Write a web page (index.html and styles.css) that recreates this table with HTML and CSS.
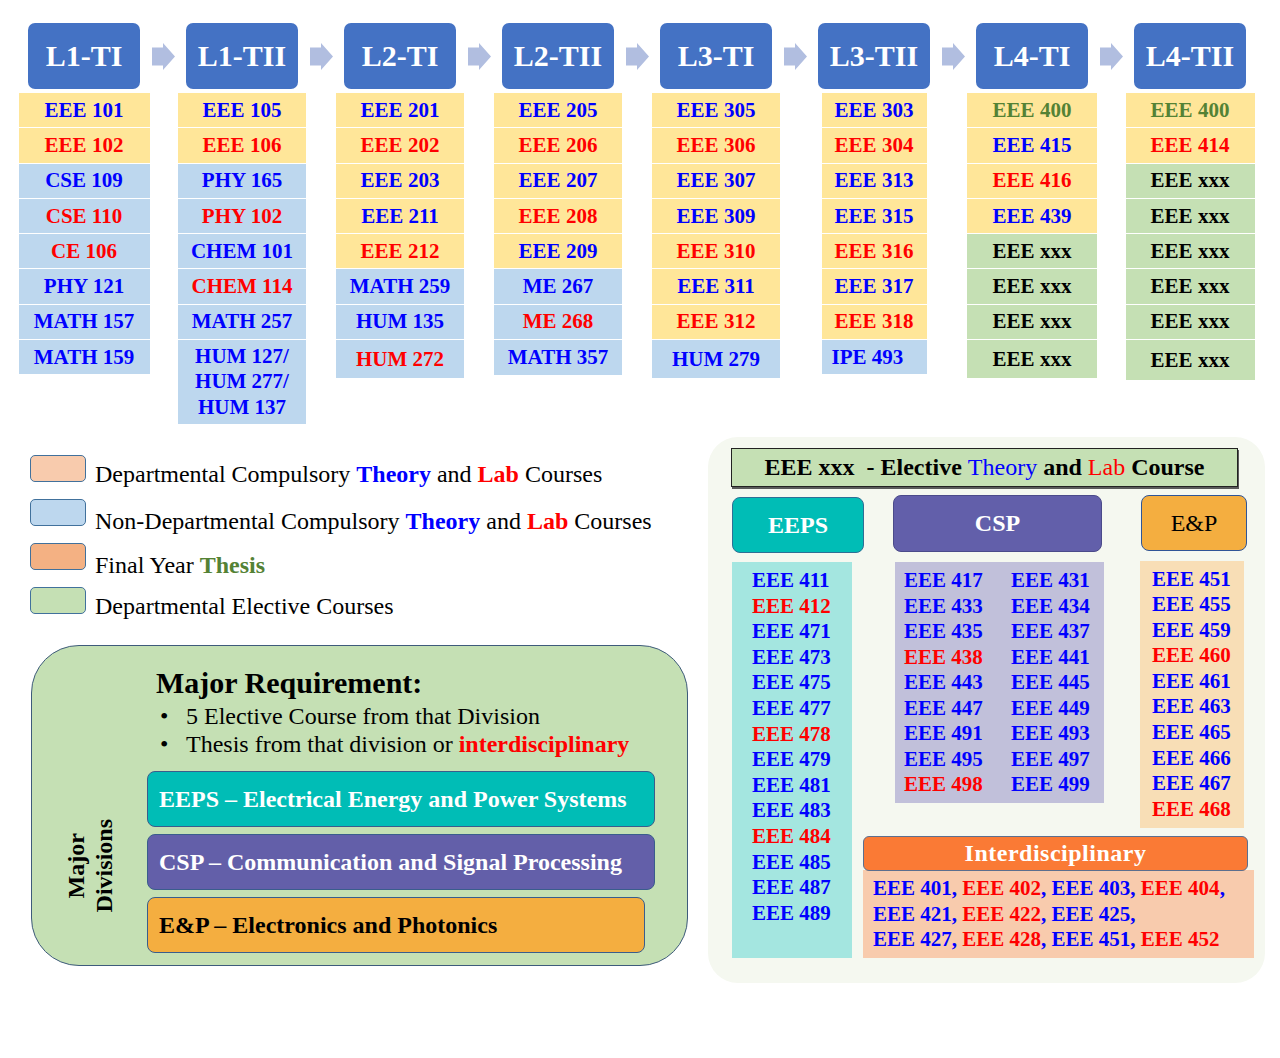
FILE: index.html
```html
<!DOCTYPE html>
<html>
<head>
<meta charset="utf-8">
<title>EEE Course Roadmap</title>
<link rel="stylesheet" href="styles.css">
</head>
<body>
<div class="page">
  <section class="levels">
    <div class="heads">
      <div class="head">L1-TI</div>
      <div class="arrow"><svg width="23" height="27" viewBox="0 0 23 27"><path d="M0 4.5H11V0L23 13.5L11 27V22.5H0Z"/></svg></div>
      <div class="head">L1-TII</div>
      <div class="arrow"><svg width="23" height="27" viewBox="0 0 23 27"><path d="M0 4.5H11V0L23 13.5L11 27V22.5H0Z"/></svg></div>
      <div class="head">L2-TI</div>
      <div class="arrow"><svg width="23" height="27" viewBox="0 0 23 27"><path d="M0 4.5H11V0L23 13.5L11 27V22.5H0Z"/></svg></div>
      <div class="head">L2-TII</div>
      <div class="arrow"><svg width="23" height="27" viewBox="0 0 23 27"><path d="M0 4.5H11V0L23 13.5L11 27V22.5H0Z"/></svg></div>
      <div class="head">L3-TI</div>
      <div class="arrow"><svg width="23" height="27" viewBox="0 0 23 27"><path d="M0 4.5H11V0L23 13.5L11 27V22.5H0Z"/></svg></div>
      <div class="head">L3-TII</div>
      <div class="arrow"><svg width="23" height="27" viewBox="0 0 23 27"><path d="M0 4.5H11V0L23 13.5L11 27V22.5H0Z"/></svg></div>
      <div class="head">L4-TI</div>
      <div class="arrow"><svg width="23" height="27" viewBox="0 0 23 27"><path d="M0 4.5H11V0L23 13.5L11 27V22.5H0Z"/></svg></div>
      <div class="head">L4-TII</div>
    </div>

    <div class="cols">
      <div class="slot"><div class="col w131">
        <div class="cell yel blue">EEE 101</div>
        <div class="cell yel red">EEE 102</div>
        <div class="cell sky blue">CSE 109</div>
        <div class="cell sky red">CSE 110</div>
        <div class="cell sky red">CE 106</div>
        <div class="cell sky blue">PHY 121</div>
        <div class="cell sky blue">MATH 157</div>
        <div class="cell sky blue">MATH 159</div>
      </div></div>

      <div class="slot"><div class="col w128">
        <div class="cell yel blue">EEE 105</div>
        <div class="cell yel red">EEE 106</div>
        <div class="cell sky blue">PHY 165</div>
        <div class="cell sky red">PHY 102</div>
        <div class="cell sky blue">CHEM 101</div>
        <div class="cell sky red">CHEM 114</div>
        <div class="cell sky blue">MATH 257</div>
        <div class="cell sky blue multi"><span>HUM 127/</span><span>HUM 277/</span><span>HUM 137</span></div>
      </div></div>

      <div class="slot"><div class="col w128">
        <div class="cell yel blue">EEE 201</div>
        <div class="cell yel red">EEE 202</div>
        <div class="cell yel blue">EEE 203</div>
        <div class="cell yel blue">EEE 211</div>
        <div class="cell yel red">EEE 212</div>
        <div class="cell sky blue">MATH 259</div>
        <div class="cell sky blue">HUM 135</div>
        <div class="cell sky red tall">HUM 272</div>
      </div></div>

      <div class="slot"><div class="col w128">
        <div class="cell yel blue">EEE 205</div>
        <div class="cell yel red">EEE 206</div>
        <div class="cell yel blue">EEE 207</div>
        <div class="cell yel red">EEE 208</div>
        <div class="cell yel blue">EEE 209</div>
        <div class="cell sky blue">ME 267</div>
        <div class="cell sky red">ME 268</div>
        <div class="cell sky blue mid">MATH 357</div>
      </div></div>

      <div class="slot"><div class="col w128">
        <div class="cell yel blue">EEE 305</div>
        <div class="cell yel red">EEE 306</div>
        <div class="cell yel blue">EEE 307</div>
        <div class="cell yel blue">EEE 309</div>
        <div class="cell yel red">EEE 310</div>
        <div class="cell yel blue">EEE 311</div>
        <div class="cell yel red">EEE 312</div>
        <div class="cell sky blue tall">HUM 279</div>
      </div></div>

      <div class="slot"><div class="col w105">
        <div class="cell yel blue">EEE 303</div>
        <div class="cell yel red">EEE 304</div>
        <div class="cell yel blue">EEE 313</div>
        <div class="cell yel blue">EEE 315</div>
        <div class="cell yel red">EEE 316</div>
        <div class="cell yel blue">EEE 317</div>
        <div class="cell yel red">EEE 318</div>
        <div class="cell sky blue shift">IPE 493</div>
      </div></div>

      <div class="slot"><div class="col w130">
        <div class="cell yel green">EEE 400</div>
        <div class="cell yel blue">EEE 415</div>
        <div class="cell yel red">EEE 416</div>
        <div class="cell yel blue">EEE 439</div>
        <div class="cell grn black">EEE xxx</div>
        <div class="cell grn black">EEE xxx</div>
        <div class="cell grn black">EEE xxx</div>
        <div class="cell grn black tall">EEE xxx</div>
      </div></div>

      <div class="slot"><div class="col w129">
        <div class="cell yel green">EEE 400</div>
        <div class="cell yel red">EEE 414</div>
        <div class="cell grn black">EEE xxx</div>
        <div class="cell grn black">EEE xxx</div>
        <div class="cell grn black">EEE xxx</div>
        <div class="cell grn black">EEE xxx</div>
        <div class="cell grn black">EEE xxx</div>
        <div class="cell grn black taller">EEE xxx</div>
      </div></div>
    </div>
  </section>

  <section class="bottom">
    <div class="left">
      <div class="legend">
        <div class="leg-row"><div class="swatch sw-peach"></div><div class="leg-text">Departmental Compulsory <b class="blue">Theory</b> and <b class="red">Lab</b> Courses</div></div>
        <div class="leg-row"><div class="swatch sw-sky"></div><div class="leg-text">Non-Departmental Compulsory <b class="blue">Theory</b> and <b class="red">Lab</b> Courses</div></div>
        <div class="leg-row"><div class="swatch sw-orange"></div><div class="leg-text">Final Year <b class="green">Thesis</b></div></div>
        <div class="leg-row"><div class="swatch sw-green"></div><div class="leg-text">Departmental Elective Courses</div></div>
      </div>

      <div class="major">
        <div class="req">
          <h2 class="req-title">Major Requirement:</h2>
          <ul class="req-list">
            <li><span class="dot">•</span>5 Elective Course from that Division</li>
            <li><span class="dot">•</span>Thesis from that division or <b class="red">interdisciplinary</b></li>
          </ul>
        </div>
        <div class="mlabel">Major<br>Divisions</div>
        <div class="bars">
          <div class="bar bar-eeps">EEPS – Electrical Energy and Power Systems</div>
          <div class="bar bar-csp">CSP – Communication and Signal Processing</div>
          <div class="bar bar-ep">E&amp;P – Electronics and Photonics</div>
        </div>
      </div>
    </div>

    <div class="panel">
      <div class="title">EEE xxx&nbsp; - Elective&nbsp;<span class="blue thin">Theory</span>&nbsp;and&nbsp;<span class="red thin">Lab</span>&nbsp;Course</div>
      <div class="divs">
        <div class="eeps-col">
          <div class="dhead dh-eeps">EEPS</div>
          <div class="eeps-list">
            <div class="blue">EEE 411</div>
            <div class="red">EEE 412</div>
            <div class="blue">EEE 471</div>
            <div class="blue">EEE 473</div>
            <div class="blue">EEE 475</div>
            <div class="blue">EEE 477</div>
            <div class="red">EEE 478</div>
            <div class="blue">EEE 479</div>
            <div class="blue">EEE 481</div>
            <div class="blue">EEE 483</div>
            <div class="red">EEE 484</div>
            <div class="blue">EEE 485</div>
            <div class="blue">EEE 487</div>
            <div class="blue">EEE 489</div>
          </div>
        </div>
        <div class="rcol">
          <div class="rtop">
            <div class="csp-grp">
              <div class="dhead dh-csp">CSP</div>
              <div class="csp-list">
                <div class="blue">EEE 417</div><div class="blue">EEE 431</div>
                <div class="blue">EEE 433</div><div class="blue">EEE 434</div>
                <div class="blue">EEE 435</div><div class="blue">EEE 437</div>
                <div class="red">EEE 438</div><div class="blue">EEE 441</div>
                <div class="blue">EEE 443</div><div class="blue">EEE 445</div>
                <div class="blue">EEE 447</div><div class="blue">EEE 449</div>
                <div class="blue">EEE 491</div><div class="blue">EEE 493</div>
                <div class="blue">EEE 495</div><div class="blue">EEE 497</div>
                <div class="red">EEE 498</div><div class="blue">EEE 499</div>
              </div>
            </div>
            <div class="ep-grp">
              <div class="dhead dh-ep">E&amp;P</div>
              <div class="ep-list">
                <div class="blue">EEE 451</div>
                <div class="blue">EEE 455</div>
                <div class="blue">EEE 459</div>
                <div class="red">EEE 460</div>
                <div class="blue">EEE 461</div>
                <div class="blue">EEE 463</div>
                <div class="blue">EEE 465</div>
                <div class="blue">EEE 466</div>
                <div class="blue">EEE 467</div>
                <div class="red">EEE 468</div>
              </div>
            </div>
          </div>
          <div class="inter">
            <div class="ihead">Interdisciplinary</div>
            <div class="ibody">
              <div>EEE 401, <span class="red">EEE 402</span>, EEE 403, <span class="red">EEE 404</span>,</div>
              <div>EEE 421, <span class="red">EEE 422</span>, EEE 425,</div>
              <div>EEE 427, <span class="red">EEE 428</span>, EEE 451, <span class="red">EEE 452</span></div>
            </div>
          </div>
        </div>
      </div>
    </div>
  </section>
</div>
</body>
</html>
```

FILE: styles.css
```css
* {
  box-sizing: border-box;
  margin: 0;
  padding: 0;
}

body {
  margin: 0;
  background: #ffffff;
  font-family: "Liberation Serif", "Times New Roman", serif;
  color: #000000;
}

.page {
  width: 1280px;
  height: 1058px;
  overflow: hidden;
  padding-top: 23px;
}

/* text colours */
.blue { color: #0000ff; }
.red { color: #ff0000; }
.green { color: #548235; }
.black { color: #000000; }
.thin { font-weight: normal; }

/* ---------- top level roadmap ---------- */
.heads {
  display: flex;
  padding-left: 28px;
}

.head {
  width: 112px;
  height: 66px;
  flex: none;
  background: #4472c4;
  border-radius: 7px;
  color: #ffffff;
  font-size: 30px;
  font-weight: bold;
  display: flex;
  align-items: center;
  justify-content: center;
}

.arrow {
  width: 46px;
  flex: none;
  display: flex;
  align-items: center;
  justify-content: center;
}

.arrow svg {
  display: block;
  fill: #b1bee0;
}

.cols {
  display: flex;
  align-items: flex-start;
  padding-left: 5px;
  margin-top: 4px;
}

.slot {
  width: 158px;
  flex: none;
  display: flex;
  justify-content: center;
}

.col {
  display: flex;
  flex-direction: column;
  gap: 1px;
}

.w131 { width: 131px; }
.w130 { width: 130px; }
.w129 { width: 129px; }
.w128 { width: 128px; }
.w105 { width: 105px; }

.cell {
  height: 34.3px;
  display: flex;
  align-items: center;
  justify-content: center;
  font-size: 21px;
  font-weight: bold;
  white-space: nowrap;
}

.cell.tall { height: 38px; }
.cell.mid { height: 35px; }
.cell.taller { height: 40px; }
.cell.shift { justify-content: flex-start; padding-left: 10px; }

.cell.multi {
  height: 84px;
  flex-direction: column;
  line-height: 25.5px;
}

.yel { background: #ffe699; }
.sky { background: #bdd7ee; }
.grn { background: #c5e0b4; }

/* ---------- bottom ---------- */
.bottom {
  display: flex;
  align-items: flex-start;
  margin-top: 13px;
}

.left {
  width: 708px;
  flex: none;
  padding: 18px 0 0 30px;
}

.legend {
  display: flex;
  flex-direction: column;
  gap: 10px;
}

.leg-row {
  height: 34px;
  display: flex;
  align-items: flex-start;
}

.swatch {
  width: 56px;
  height: 27px;
  flex: none;
  border: 1px solid #41719c;
  border-radius: 5px;
}

.sw-peach { background: #f8cbad; }
.sw-sky { background: #bdd7ee; }
.sw-orange { background: #f4b183; }
.sw-green { background: #c5e0b4; }

.leg-text {
  margin: 5px 0 0 9px;
  font-size: 24px;
  line-height: 28px;
  white-space: nowrap;
}

.leg-row:nth-child(2) .leg-text,
.leg-row:nth-child(3) .leg-text {
  margin-top: 8px;
}

.major {
  margin: 24px 0 0 1px;
  width: 657px;
  height: 321px;
  background: #c5e0b4;
  border: 1px solid #3e5b7b;
  border-radius: 48px;
  padding: 20px 0 12px 0;
  display: grid;
  grid-template-columns: 115px 1fr;
  grid-template-rows: auto 1fr;
}

.req {
  grid-column: 2;
  grid-row: 1;
  margin-bottom: 13px;
}

.req-title {
  margin-left: 9px;
  font-size: 30px;
  line-height: 34px;
  font-weight: bold;
}

.req-list {
  list-style: none;
  margin: 2px 0 0 13px;
  font-size: 24px;
  line-height: 28px;
  white-space: nowrap;
}

.dot {
  display: inline-block;
  width: 26px;
}

.mlabel {
  grid-column: 1;
  grid-row: 2;
  align-self: center;
  justify-self: center;
  margin-top: 8px;
  writing-mode: vertical-rl;
  transform: rotate(180deg);
  font-size: 24px;
  font-weight: bold;
  line-height: 28px;
  text-align: center;
}

.bars {
  grid-column: 2;
  grid-row: 2;
  display: flex;
  flex-direction: column;
  gap: 7px;
}

.bar {
  height: 56px;
  border: 1px solid #3a5d8c;
  border-radius: 8px;
  display: flex;
  align-items: center;
  padding-left: 11px;
  font-size: 24px;
  font-weight: bold;
  white-space: nowrap;
}

.bar-eeps { width: 508px; background: #00bdb6; color: #ffffff; }
.bar-csp { width: 508px; background: #635fa9; color: #ffffff; }
.bar-ep { width: 498px; background: #f4ae40; color: #000000; }

/* ---------- right panel ---------- */
.panel {
  width: 557px;
  height: 546px;
  flex: none;
  background: #f5f8f0;
  border-radius: 30px;
  padding: 11px 0 0 23px;
}

.title {
  width: 507px;
  height: 39px;
  background: #c5e0b4;
  border: 1px solid #222222;
  box-shadow: 1px 2px 0 #5a5a5a;
  display: flex;
  align-items: center;
  justify-content: center;
  font-size: 24px;
  font-weight: bold;
  white-space: nowrap;
}

.divs {
  display: flex;
  align-items: flex-start;
  margin-top: 8px;
}

.eeps-col {
  width: 131px;
  flex: none;
  margin-left: 1px;
  padding-top: 2px;
}

.dhead {
  height: 56px;
  border-radius: 8px;
  display: flex;
  align-items: center;
  justify-content: center;
  font-size: 24px;
}

.dh-eeps {
  width: 132px;
  background: #00bdb6;
  color: #ffffff;
  font-weight: bold;
  border: 1px solid #2e6f95;
}

.dh-csp {
  width: 209px;
  height: 57px;
  background: #625faa;
  color: #ffffff;
  font-weight: bold;
  border: 1px solid #4b4b8a;
}

.dh-ep {
  width: 106px;
  background: #f4ae40;
  color: #000000;
  border: 1px solid #2f5597;
}

.eeps-list,
.csp-list,
.ep-list,
.ibody {
  font-size: 21px;
  font-weight: bold;
  white-space: nowrap;
}

.eeps-list {
  margin-top: 9px;
  width: 120px;
  height: 396px;
  background: #a4e6e0;
  padding: 6px 0 0 20px;
  line-height: 25.6px;
}

.rcol {
  width: 391px;
  flex: none;
}

.rtop {
  display: flex;
  align-items: flex-start;
}

.csp-grp {
  width: 211px;
  flex: none;
  margin-left: 30px;
}

.csp-list {
  margin: 10px 0 0 2px;
  width: 209px;
  background: #c1c0da;
  padding: 6px 0 5px 9px;
  display: grid;
  grid-template-columns: 107px auto;
  line-height: 25.5px;
}

.ep-grp {
  flex: none;
  margin-left: 37px;
}

.ep-list {
  margin: 10px 0 0 -1px;
  width: 104px;
  background: #f8deb6;
  padding: 5.5px 0 6px 12px;
  line-height: 25.56px;
}

.inter {
  margin-top: 8px;
}

.ihead {
  position: relative;
  z-index: 1;
  width: 385px;
  height: 35px;
  background: #fa7a35;
  border: 1px solid #5b6f8f;
  border-radius: 6px;
  color: #ffffff;
  font-size: 24px;
  font-weight: bold;
  letter-spacing: 0.5px;
  display: flex;
  align-items: center;
  justify-content: center;
}

.ibody {
  margin-top: -1px;
  width: 391px;
  height: 88px;
  background: #f8cbad;
  padding: 6px 0 0 10px;
  line-height: 25.5px;
  color: #0000ff;
}
```
